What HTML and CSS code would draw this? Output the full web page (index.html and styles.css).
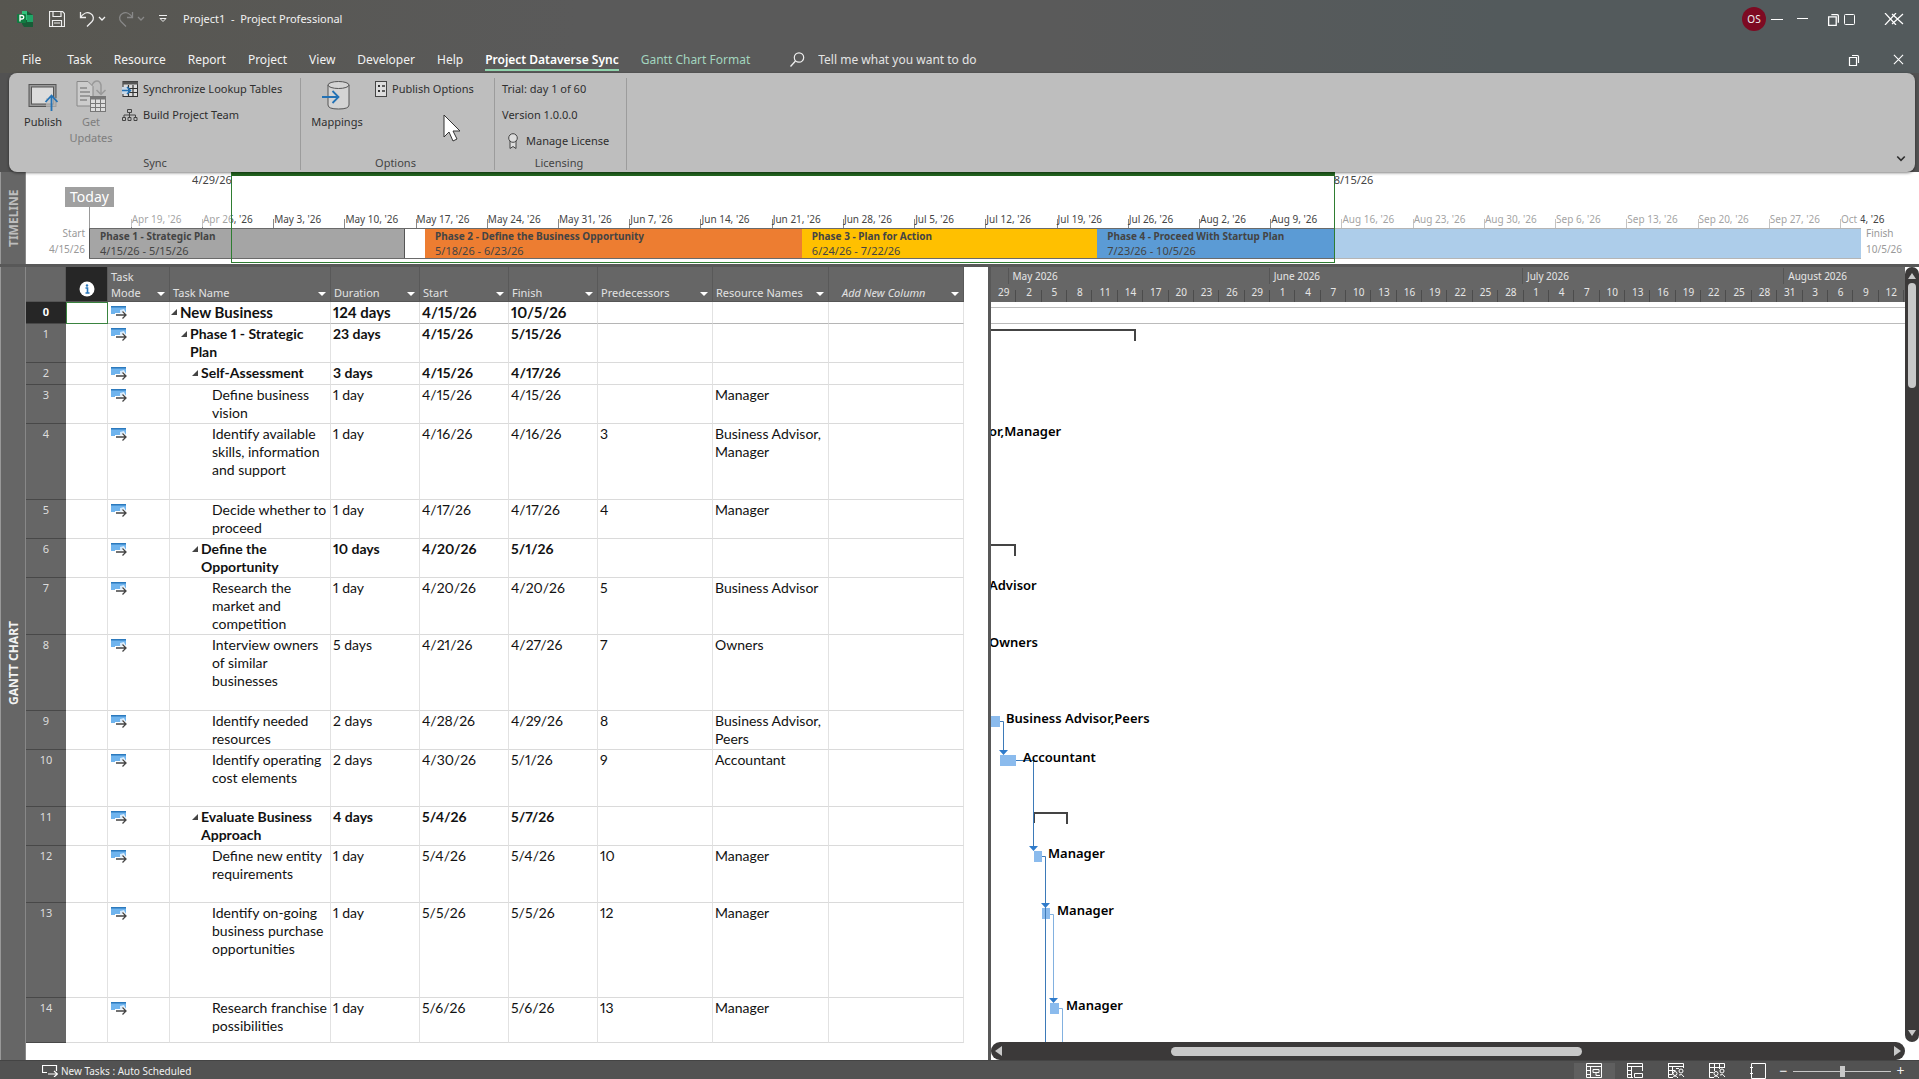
FILE: index.html
```html
<!DOCTYPE html>
<html lang="en">
<head>
    <meta charset="UTF-8">
    <title>Project1 - Project Professional</title>
    <link rel="stylesheet" href="styles.css">
</head>
<body>

<!-- shared icons -->
<svg class="defs" aria-hidden="true">
    <symbol id="i-auto" viewBox="0 0 16 13">
        <path d="M0 0h15v7H4v1H0z" fill="#6fb4ee"/>
        <path d="M0 0h15v1.500H0z" fill="#2b79bd"/>
        <path d="M9 4l4-1 2 4-6 2z" fill="#d6eafb"/>
        <path d="M4 9h11M11.500 5.500L15 9l-3.500 3.500" fill="none" stroke="#fff" stroke-width="3"/>
        <path d="M5 9h10M11.500 5.500L15 9l-3.500 3.500" fill="none" stroke="#444" stroke-width="1.300"/>
    </symbol>
    <symbol id="i-restore" viewBox="0 0 12 12">
        <path d="M1.500 3.500h7v8h-7zM4 1.500h5.500q1 0 1 1V9" fill="none" stroke="#fff" stroke-width="1.200"/>
    </symbol>
    <symbol id="i-close" viewBox="0 0 12 12">
        <path d="M1 1l10 10M11 1L1 11" fill="none" stroke="#fff" stroke-width="1.200"/>
    </symbol>
    <symbol id="i-chevron" viewBox="0 0 8 6">
        <path d="M1 1l3 3 3-3" fill="none" stroke="currentColor" stroke-width="1.300"/>
    </symbol>
</svg>

<header class="top">
    <div class="titlebar">
        <div class="quick">
            <svg class="app" viewBox="0 0 16 16"><path d="M5 0h5l6 4v12H7l-2-3z" fill="#185c37"/><path d="M5 0h5v9H5z" fill="#31c27c"/><path d="M10 4h6v7h-6z" fill="#21a366"/><rect y="3" width="9" height="9" rx="1" fill="#107c41"/><path d="M3 10.500v-6h2a1.700 1.700 0 010 3.500H3" fill="none" stroke="#fff" stroke-width="1.300"/></svg>
            <button class="qb save" aria-label="Save"><svg width="16" height="16" viewBox="0 0 16 16"><path d="M.5.5h13l2 2v13H.5zM4 .5v5h8v-5M3.500 15.500v-6h9v6M5 12h6" fill="none" stroke="#eee" stroke-width="1.200"/></svg></button>
            <button class="qb undo" aria-label="Undo"><svg width="16" height="16" viewBox="0 0 16 16"><path d="M1.500 1v5.500H7M1.500 6.500C4 2.500 8 .5 11.500 2.500S15 8 13 10.500l-5 5" fill="none" stroke="#eee" stroke-width="1.300"/></svg><svg width="8" height="6"><use href="#i-chevron"/></svg></button>
            <button class="qb redo" aria-label="Redo" disabled><svg width="16" height="16" viewBox="0 0 16 16"><path d="M14.500 1v5.500H9M14.500 6.500C12 2.500 8 .5 4.500 2.500S1 8 3 10.500l5 5" fill="none" stroke="#888" stroke-width="1.300"/></svg><svg width="8" height="6"><use href="#i-chevron"/></svg></button>
            <button class="qb more" aria-label="Customize toolbar"><svg width="8" height="8" viewBox="0 0 8 8"><path d="M0 .5h8M1 3.500l3 3 3-3z" fill="none" stroke="#eee"/></svg></button>
            <span class="doc">Project1&nbsp; -&nbsp; Project Professional</span>
        </div>
        <div class="window">
            <span class="avatar">OS</span>
            <button aria-label="Minimize app"><svg width="12" height="12"><path d="M0 6.500h12" stroke="#fff"/></svg></button>
            <button aria-label="Minimize"><svg width="12" height="12"><path d="M0 5.500h11" stroke="#fff"/></svg></button>
            <button aria-label="Restore"><svg width="13" height="13"><use href="#i-restore"/></svg></button>
            <button aria-label="Maximize"><svg width="12" height="12"><rect x=".5" y="1.500" width="10" height="10" rx="1" fill="none" stroke="#fff"/></svg></button>
            <button aria-label="Close"><svg width="20" height="12" viewBox="0 0 20 12"><path d="M1 0l11 12M12 0L1 12M8 1l11 10M19 1L8 11" stroke="#fff" stroke-width="1.200"/></svg></button>
        </div>
    </div>
    <nav class="tabs">
        <a href="#">File</a>
        <a href="#">Task</a>
        <a href="#">Resource</a>
        <a href="#">Report</a>
        <a href="#">Project</a>
        <a href="#">View</a>
        <a href="#">Developer</a>
        <a href="#">Help</a>
        <a href="#" class="active">Project Dataverse Sync</a>
        <a href="#" class="format">Gantt Chart Format</a>
        <label class="tell">
            <svg width="15" height="15" viewBox="0 0 15 15"><circle cx="9" cy="5.500" r="4.700" fill="none" stroke="#eee" stroke-width="1.200"/><path d="M5.500 9L.5 14.500" stroke="#eee" stroke-width="1.300"/></svg>
            <input type="text" placeholder="Tell me what you want to do">
        </label>
        <div class="docbtns">
            <button aria-label="Restore document"><svg width="12" height="12"><use href="#i-restore"/></svg></button>
            <button aria-label="Close document"><svg width="11" height="11"><use href="#i-close"/></svg></button>
        </div>
    </nav>
</header>

<section class="ribbon">
    <div class="group sync">
        <div class="tools">
            <button class="big publish">
                <svg width="30" height="32" viewBox="0 0 30 32"><rect x="1" y="4.500" width="27" height="22" fill="#999" stroke="#555"/><rect x="3.500" y="7" width="22" height="17" fill="#dcdcdc" stroke="#555"/><path d="M18 18h11v14H18z" fill="#bebebe" opacity=".7"/><path d="M23.500 31V16M17.500 22l6-6.500 6 6.500" fill="none" stroke="#2372b5" stroke-width="1.800"/></svg>
                Publish
            </button>
            <button class="big updates" disabled>
                <svg width="30" height="32" viewBox="0 0 30 32"><path d="M1 1.500h11l5 5V26H1z" fill="#ccc" stroke="#888"/><path d="M4 8h7M4 12h10M4 16h10M4 20h7" stroke="#888" stroke-width="1.500"/><path d="M16 5q2-4 5-4t4 4v9M20.500 10l4.500 4.500 4.500-4.500" fill="none" stroke="#999" stroke-width="1.500"/><rect x="14.500" y="16.500" width="15" height="15" fill="#ddd" stroke="#777"/><path d="M14 18h16" stroke="#777" stroke-width="3"/><path d="M19.500 17v14M24.500 17v14M15 23.500h14M15 27.500h14" stroke="#777"/></svg>
                Get<br>Updates
            </button>
            <div class="stack">
                <button class="small">
                    <svg width="16" height="16" viewBox="0 0 16 16"><rect x="1" y=".5" width="14.500" height="15" fill="#ddd" stroke="#333"/><path d="M1 2h15" stroke="#555" stroke-width="3"/><path d="M6.500 4v12M11 4v12M1 7.500h15M1 11.500h15" stroke="#333" stroke-width="1.200"/><path d="M0 6h6v7H0z" fill="#c8d8e8"/><path d="M0 9.500h8M5 6l3.500 3.500L5 13" fill="none" stroke="#2372b5" stroke-width="1.500"/></svg>
                    Synchronize Lookup Tables
                </button>
                <button class="small">
                    <svg width="16" height="16" viewBox="0 0 16 16"><path d="M5.500 2.500h4v3h-4zM.5 10.500h3v3h-3zM6 10.500h3v3H6zM12 10.500h3v3h-3zM7.500 6v4M2 10V8h11.500v2" fill="none" stroke="#444"/></svg>
                    Build Project Team
                </button>
            </div>
        </div>
        <div class="caption">Sync</div>
    </div>
    <div class="group options">
        <div class="tools">
            <button class="big mappings">
                <svg width="30" height="32" viewBox="0 0 30 32"><path d="M6 5v20q0 4 10.500 4T27 25V5" fill="#d4d4d4" stroke="#555"/><ellipse cx="16.500" cy="5" rx="10.500" ry="3.500" fill="#d4d4d4" stroke="#555"/><path d="M0 17h16M10.500 11l6 6-6 6" fill="none" stroke="#2372b5" stroke-width="1.800"/></svg>
                Mappings
            </button>
            <div class="stack">
                <button class="small">
                    <svg width="12" height="16" viewBox="0 0 12 16"><rect x=".5" y=".5" width="11" height="15" fill="#ddd" stroke="#444"/><path d="M3 4h2v2H3zM3 9h2v2H3z" fill="#333"/><path d="M7 5h3M7 10h3" stroke="#333" stroke-width="1.300"/></svg>
                    Publish Options
                </button>
            </div>
        </div>
        <div class="caption">Options</div>
    </div>
    <div class="group licensing">
        <div class="stack">
            <span>Trial: day 1 of 60</span>
            <span>Version 1.0.0.0</span>
            <button class="small">
                <svg width="12" height="16" viewBox="0 0 12 16"><path d="M3 8v7.500l3-2 3 2V8" fill="#ddd" stroke="#444"/><circle cx="6" cy="5" r="4.300" fill="#ddd" stroke="#444"/></svg>
                Manage License
            </button>
        </div>
        <div class="caption">Licensing</div>
    </div>
    <button class="collapse" aria-label="Collapse ribbon"><svg width="10" height="8"><use href="#i-chevron"/></svg></button>
    <svg class="cursor" width="18" height="29" viewBox="0 0 18 29"><path d="M1 1v22l5-5 4 9 4-2-4-8h7z" fill="#fff" stroke="#333"/></svg>
</section>

<section class="timeline">
    <div class="side">TIMELINE</div>
    <div class="edge start">Start<br>4/15/26</div>
    <div class="axis">
        <span class="today">Today</span>
        <div class="ticks">
            <span>Apr 19, '26</span><span>Apr 26, '26</span><span>May 3, '26</span><span>May 10, '26</span><span>May 17, '26</span><span>May 24, '26</span><span>May 31, '26</span><span>Jun 7, '26</span><span>Jun 14, '26</span><span>Jun 21, '26</span><span>Jun 28, '26</span><span>Jul 5, '26</span><span>Jul 12, '26</span><span>Jul 19, '26</span><span>Jul 26, '26</span><span>Aug 2, '26</span><span>Aug 9, '26</span><span>Aug 16, '26</span><span>Aug 23, '26</span><span>Aug 30, '26</span><span>Sep 6, '26</span><span>Sep 13, '26</span><span>Sep 20, '26</span><span>Sep 27, '26</span><span>Oct 4, '26</span>
        </div>
        <div class="phases">
            <div class="phase p1"><b>Phase 1 - Strategic Plan</b>4/15/26 - 5/15/26</div>
            <div class="phase p2"><b>Phase 2 - Define the Business Opportunity</b>5/18/26 - 6/23/26</div>
            <div class="phase p3"><b>Phase 3 - Plan for Action</b>6/24/26 - 7/22/26</div>
            <div class="phase p4"><b>Phase 4 - Proceed With Startup Plan</b>7/23/26 - 10/5/26</div>
        </div>
        <div class="veil before"></div>
        <div class="veil after"></div>
        <div class="range"><span class="from">4/29/26</span><span class="to">8/15/26</span></div>
    </div>
    <div class="edge finish">Finish<br>10/5/26</div>
</section>

<main class="workspace">
    <div class="side">GANTT CHART</div>
    <div class="sheet">
        <table>
            <colgroup>
                <col class="c-id"><col class="c-info"><col class="c-mode"><col class="c-name"><col class="c-date"><col class="c-date"><col class="c-date"><col class="c-pred"><col class="c-res"><col class="c-new">
            </colgroup>
            <thead>
            <tr>
                <th></th>
                <th class="info"><svg width="16" height="16" viewBox="0 0 16 16"><circle cx="8" cy="8" r="7.500" fill="#fff"/><circle cx="8" cy="4.500" r="1.200" fill="#2b79bd"/><path d="M6.500 7H8.500v5M6.500 12h4" fill="none" stroke="#2b79bd" stroke-width="1.600"/></svg></th>
                <th>Task<br>Mode<button aria-label="Filter Task Mode"></button></th>
                <th>Task Name<button aria-label="Filter Task Name"></button></th>
                <th>Duration<button aria-label="Filter Duration"></button></th>
                <th>Start<button aria-label="Filter Start"></button></th>
                <th>Finish<button aria-label="Filter Finish"></button></th>
                <th>Predecessors<button aria-label="Filter Predecessors"></button></th>
                <th>Resource Names<button aria-label="Filter Resource Names"></button></th>
                <th class="new">Add New Column<button aria-label="Add column"></button></th>
            </tr>
            </thead>
            <tbody>
            <tr class="h1 sum root"><th>0</th><td class="picked"></td><td><svg><use href="#i-auto"/></svg></td><td class="lv0">New Business</td><td>124 days</td><td>4/15/26</td><td>10/5/26</td><td></td><td></td><td></td></tr>
            <tr class="h2 sum"><th>1</th><td></td><td><svg><use href="#i-auto"/></svg></td><td class="lv1">Phase 1 - Strategic Plan</td><td>23 days</td><td>4/15/26</td><td>5/15/26</td><td></td><td></td><td></td></tr>
            <tr class="h1 sum"><th>2</th><td></td><td><svg><use href="#i-auto"/></svg></td><td class="lv2">Self-Assessment</td><td>3 days</td><td>4/15/26</td><td>4/17/26</td><td></td><td></td><td></td></tr>
            <tr class="h2"><th>3</th><td></td><td><svg><use href="#i-auto"/></svg></td><td class="lv3">Define business vision</td><td>1 day</td><td>4/15/26</td><td>4/15/26</td><td></td><td>Manager</td><td></td></tr>
            <tr class="h4"><th>4</th><td></td><td><svg><use href="#i-auto"/></svg></td><td class="lv3">Identify available skills, information and support</td><td>1 day</td><td>4/16/26</td><td>4/16/26</td><td>3</td><td>Business Advisor,<br>Manager</td><td></td></tr>
            <tr class="h2"><th>5</th><td></td><td><svg><use href="#i-auto"/></svg></td><td class="lv3">Decide whether to proceed</td><td>1 day</td><td>4/17/26</td><td>4/17/26</td><td>4</td><td>Manager</td><td></td></tr>
            <tr class="h2 sum"><th>6</th><td></td><td><svg><use href="#i-auto"/></svg></td><td class="lv2">Define the Opportunity</td><td>10 days</td><td>4/20/26</td><td>5/1/26</td><td></td><td></td><td></td></tr>
            <tr class="h3"><th>7</th><td></td><td><svg><use href="#i-auto"/></svg></td><td class="lv3">Research the market and competition</td><td>1 day</td><td>4/20/26</td><td>4/20/26</td><td>5</td><td>Business Advisor</td><td></td></tr>
            <tr class="h4"><th>8</th><td></td><td><svg><use href="#i-auto"/></svg></td><td class="lv3">Interview owners of similar businesses</td><td>5 days</td><td>4/21/26</td><td>4/27/26</td><td>7</td><td>Owners</td><td></td></tr>
            <tr class="h2"><th>9</th><td></td><td><svg><use href="#i-auto"/></svg></td><td class="lv3">Identify needed resources</td><td>2 days</td><td>4/28/26</td><td>4/29/26</td><td>8</td><td>Business Advisor,<br>Peers</td><td></td></tr>
            <tr class="h3"><th>10</th><td></td><td><svg><use href="#i-auto"/></svg></td><td class="lv3">Identify operating cost elements</td><td>2 days</td><td>4/30/26</td><td>5/1/26</td><td>9</td><td>Accountant</td><td></td></tr>
            <tr class="h2 sum"><th>11</th><td></td><td><svg><use href="#i-auto"/></svg></td><td class="lv2">Evaluate Business Approach</td><td>4 days</td><td>5/4/26</td><td>5/7/26</td><td></td><td></td><td></td></tr>
            <tr class="h3"><th>12</th><td></td><td><svg><use href="#i-auto"/></svg></td><td class="lv3">Define new entity requirements</td><td>1 day</td><td>5/4/26</td><td>5/4/26</td><td>10</td><td>Manager</td><td></td></tr>
            <tr class="h5"><th>13</th><td></td><td><svg><use href="#i-auto"/></svg></td><td class="lv3">Identify on-going business purchase opportunities</td><td>1 day</td><td>5/5/26</td><td>5/5/26</td><td>12</td><td>Manager</td><td></td></tr>
            <tr class="last"><th>14</th><td></td><td><svg><use href="#i-auto"/></svg></td><td class="lv3">Research franchise possibilities</td><td>1 day</td><td>5/6/26</td><td>5/6/26</td><td>13</td><td>Manager</td><td></td></tr>
            </tbody>
        </table>
    </div>
    <div class="chart">
        <div class="scale">
            <div class="months">
                <span class="m-apr"></span><span class="m-may">May 2026</span><span class="m-jun">June 2026</span><span class="m-jul">July 2026</span><span class="m-aug">August 2026</span>
            </div>
            <div class="days">
                <span>29</span><span>2</span><span>5</span><span>8</span><span>11</span><span>14</span><span>17</span><span>20</span><span>23</span><span>26</span><span>29</span><span>1</span><span>4</span><span>7</span><span>10</span><span>13</span><span>16</span><span>19</span><span>22</span><span>25</span><span>28</span><span>1</span><span>4</span><span>7</span><span>10</span><span>13</span><span>16</span><span>19</span><span>22</span><span>25</span><span>28</span><span>31</span><span>3</span><span>6</span><span>9</span><span>12</span>
            </div>
        </div>
        <svg class="bars">
            <!-- project row -->
            <path class="rule" d="M0 5.500H2000M0 21.500H2000"/>
            <!-- summary brackets -->
            <path class="bracket" d="M0 28h144v11M0 243h24v11M43 521v-10h33v11"/>
            <!-- task bars -->
            <path class="bar" d="M0 414h9v11H0zM9 453h16v11H9zM43 549h8v11h-8zM51 606h8v11h-8zM59 701h9v11h-9z"/>
            <!-- links -->
            <path class="link" d="M9 419.500h3.500V450M25 458.500h17.500V546M51 554.500h3.500V740"/>
            <path class="link light" d="M59 612.500h3.500V698M68 706.500h3.500V740"/>
            <path class="arrow" d="M8 448h9l-4.500 5zM38 544h9l-4.500 5zM50 601h9l-4.500 5zM58 696h9l-4.500 5z"/>
            <text x="-2" y="134">or,Manager</text>
            <text x="-2" y="288">Advisor</text>
            <text x="-2" y="345">Owners</text>
            <text x="15" y="421">Business Advisor,Peers</text>
            <text x="32" y="460">Accountant</text>
            <text x="57" y="556">Manager</text>
            <text x="66" y="613">Manager</text>
            <text x="75" y="708">Manager</text>
        </svg>
        <div class="scroll horizontal">
            <button class="left" aria-label="Scroll left"></button>
            <div class="track"><div class="thumb"></div></div>
            <button class="right" aria-label="Scroll right"></button>
        </div>
    </div>
    <div class="scroll vertical">
        <button class="up" aria-label="Scroll up"></button>
        <div class="track"><div class="thumb"></div></div>
        <button class="down" aria-label="Scroll down"></button>
    </div>
</main>

<footer class="status">
    <svg class="mode" width="16" height="12" viewBox="0 0 16 12"><path d="M5 7.500H.5v-7h14V6M6 9h9M12 6l3.500 3L12 12" fill="none" stroke="#fff" stroke-width="1.200"/></svg>
    <span>New Tasks : Auto Scheduled</span>
    <div class="views">
        <button class="on" aria-label="Gantt Chart"><svg width="17" height="16"><path d="M.5.500h15v14H.500zM.5 3.500h15M4.500 3v12M.5 7.500h4M.5 11.500h4M7 6.500h6v3H7zM10 9.500v3h4" /></svg></button>
        <button aria-label="Task Usage"><svg width="17" height="16"><path d="M.5.500h15V8M.5 0v14.500H6M.5 3.500h15M4.500 3v12M.5 7.500h4M.5 11.500h4M7.500 10.500h8v4h-8z"/></svg></button>
        <button aria-label="Team Planner"><svg width="17" height="16"><path d="M.5.500h15V5M.5 0v14.500H4M.5 3.500h15M4.500 3v8M.5 7.500h7M.5 11.500h4M8 5.500h3"/><circle cx="7" cy="10.500" r="2"/><circle cx="13" cy="8" r="2"/><path d="M4 15q3-4 6 0M11 12q3-2 5 2"/></svg></button>
        <button aria-label="Resource Sheet"><svg width="17" height="16"><path d="M.5.500h15V5M.5 0v14.500H4M.5 4.500h15M5.500 0v8M10.500 0v6M.5 9.500h4"/><circle cx="7" cy="10.500" r="2"/><circle cx="13" cy="8" r="2"/><path d="M4 15q3-4 6 0M11 12q3-2 5 2"/></svg></button>
        <button aria-label="Report"><svg width="17" height="16"><path d="M1.500.500h14v15h-14zM0 4.500h3M0 10.500h3"/></svg></button>
    </div>
    <div class="zoom">
        <button aria-label="Zoom out">−</button>
        <input type="range" min="0" max="100" value="50" aria-label="Zoom">
        <button aria-label="Zoom in">+</button>
    </div>
</footer>

</body>
</html>
```
FILE: styles.css
```css
* {
    box-sizing: border-box;
}

body {
    margin: 0;
    min-height: 100vh;
    display: flex;
    flex-direction: column;
    font-family: "Noto Sans", "Open Sans", sans-serif;
    font-size: 11px;
    line-height: 16px;
    background: #525252;
    overflow: hidden;
}

button {
    padding: 0;
    border: 0;
    background: none;
    font: inherit;
    color: inherit;
}

svg {
    flex: none;
}

.defs {
    position: absolute;
    width: 0;
    height: 0;
}

/* title bar and tabs */
.top {
    padding-bottom: 2px;
    background: linear-gradient(90deg, #575650 0, #5a5a5a 30%, #5a5a5a 55%, #535a5c 78%);
    color: #f2f2f2;
}

.titlebar {
    display: flex;
    justify-content: space-between;
    height: 38px;
}

.quick, .window, .tabs, .docbtns {
    display: flex;
    align-items: center;
}

.quick {
    padding-left: 17px;
}

.app {
    width: 16px;
    height: 16px;
}

.qb {
    display: flex;
    align-items: center;
    gap: 3px;
    margin-left: 14px;
}

.save {
    margin-left: 16px;
}

.redo {
    margin-left: 12px;
    color: #888;
}

.doc {
    margin-left: 16px;
}

.window {
    gap: 14px;
    padding-right: 15px;
}

.window button, .docbtns button {
    display: flex;
}

.avatar {
    width: 24px;
    height: 24px;
    border-radius: 50%;
    background: #7d0a22;
    font-size: 10px;
    line-height: 24px;
    text-align: center;
}

.window button:nth-child(2) {
    margin-left: -9px;
}

.window button:nth-child(4) {
    margin-left: 4px;
}

.window button:nth-child(5) {
    margin-left: -10px;
}

.window button:last-child {
    margin-left: 14px;
}

.tabs {
    gap: 22px;
    height: 33px;
    padding: 10px 15px 0 22px;
    font-size: 12px;
}

.tabs a {
    color: inherit;
    line-height: 19px;
    text-decoration: none;
    white-space: nowrap;
    border: solid transparent;
    border-width: 2px 0;
}

.tabs a:first-child {
    margin-right: 4px;
}

.tabs a.active {
    font-weight: 600;
    color: #fff;
    border-bottom-color: #8fd3ac;
}

.tabs a.format {
    color: #a3d5bf;
}

.tell {
    display: flex;
    align-items: center;
    gap: 13px;
    margin-left: 18px;
}

.tell input {
    width: 200px;
    padding: 0;
    border: 0;
    background: none;
    font: inherit;
    color: #fff;
}

.tell input::placeholder {
    color: #e4e4e4;
    opacity: 1;
}

.docbtns {
    gap: 33px;
    margin-left: auto;
}

/* ribbon */
.ribbon {
    position: relative;
    z-index: 2;
    display: flex;
    height: 99px;
    margin: 0 4px 0 9px;
    padding: 5px 0 2px;
    border-radius: 8px;
    background: #bebebe;
    box-shadow: 0 1px 3px rgba(0, 0, 0, .5);
    color: #2e2e2e;
}

.group {
    display: flex;
    flex-direction: column;
    justify-content: space-between;
    border-right: 1px solid #9c9c9c;
}

.sync {
    width: 292px;
    padding-left: 15px;
}

.options {
    width: 194px;
    padding-left: 10px;
}

.licensing {
    width: 132px;
    padding-left: 7px;
}

.tools {
    display: flex;
    align-items: flex-start;
}

.caption {
    line-height: 14px;
    text-align: center;
    color: #444;
}

.sync .caption, .options .caption {
    padding-right: 14px;
}

.licensing .caption {
    padding-right: 10px;
}

.big {
    display: flex;
    flex-direction: column;
    align-items: center;
    width: 52px;
    padding-top: 2px;
}

.big svg {
    margin-bottom: 2px;
}

.publish {
    width: 38px;
    margin-right: 3px;
}

.updates {
    color: #7d7d7d;
}

.stack {
    display: flex;
    flex-direction: column;
    gap: 10px;
    padding: 3px 0 0 5px;
}

.licensing .stack {
    padding-left: 0;
}

.options .stack {
    padding-left: 12px;
}

.small {
    display: flex;
    gap: 5px;
    white-space: nowrap;
}

.licensing .small {
    gap: 7px;
    padding-left: 5px;
}

.collapse {
    position: absolute;
    right: 9px;
    bottom: 9px;
    display: flex;
}

.cursor {
    position: absolute;
    left: 434px;
    top: 41px;
}

/* timeline */
.side {
    width: 26px;
    flex: none;
    padding-right: 2px;
    background: #666;
    color: #bdbdbd;
    border-left: 1px solid #888;
    border-right: 1px solid #999;
    font-size: 12px;
    font-weight: 700;
    line-height: 22px;
    text-align: center;
    writing-mode: vertical-rl;
    transform: rotate(180deg);
}

.timeline {
    display: grid;
    grid-template-columns: 26px 64px minmax(0, 1fr) 58px;
    height: 95px;
    border-bottom: 3px solid #585858;
    background: #fff;
    color: #444;
}

.edge {
    padding: 53px 5px 0;
    color: #999;
    font-size: 10px;
}

.start {
    text-align: right;
}

.axis {
    position: relative;
    display: flex;
    flex-direction: column;
    align-items: flex-start;
    margin-left: -1px;
}

.today {
    height: 20px;
    margin: 15px 0 0 -24px;
    padding: 0 5px;
    background: #a0a0a0;
    color: #fff;
    font-size: 14px;
    line-height: 20px;
}

.ticks {
    display: flex;
    width: 100%;
    height: 21px;
    padding-left: 2.299%;
    border-left: 1px solid #999;
    font-size: 10px;
    line-height: 24px;
}

.ticks span {
    flex: 7 1 0;
    min-width: 0;
    padding-left: 1px;
    white-space: nowrap;
    background: linear-gradient(#888, #888) 0 100% / 1px 9px no-repeat;
}

.ticks span:last-child {
    flex-grow: 2;
}

.phases {
    display: grid;
    grid-template-columns: 31fr 2fr 37fr 29fr 75fr;
    width: 100%;
    height: 31px;
    border: solid #6a6a6a;
    border-width: 1px 0;
}

.phase {
    padding-left: 10px;
    line-height: 14px;
    white-space: nowrap;
    overflow: hidden;
}

.phase b {
    display: block;
    line-height: 15px;
    font-size: 10px;
}

.p1 {
    background: #a5a5a5;
    border: solid #555;
    border-width: 0 1px;
}

.p2 {
    grid-column: 3;
    background: #ed7d31;
}

.p3 {
    background: #ffc000;
}

.p4 {
    background: #5b9bd5;
}

.veil {
    position: absolute;
    background: rgba(255, 255, 255, .5);
}

.before {
    top: 36px;
    height: 19px;
    left: 1px;
    width: 8%;
}

.after {
    top: 36px;
    height: 51px;
    left: 70.3%;
    right: 0;
}

.range {
    position: absolute;
    top: 0;
    bottom: 1px;
    left: 8%;
    width: 62.300%;
    border: 1px solid #2f7d32;
    border-top: 4px solid #23651f;
}

.range span {
    position: absolute;
    top: -4px;
}

.from {
    right: 100%;
}

.to {
    left: 100%;
}

/* workspace */
.workspace {
    flex: 1;
    display: flex;
    background: #fff;
}

.workspace > .side {
    color: #f2f2f2;
}

.sheet {
    flex: none;
    box-sizing: content-box;
    width: 938px;
    padding-right: 24px;
    border-right: 3px solid #585858;
}

table {
    width: 100%;
    table-layout: fixed;
    border-collapse: separate;
    border-spacing: 0;
    font-family: Lato, "Open Sans", sans-serif;
    font-size: 14px;
    font-variant-numeric: proportional-nums;
    line-height: 18px;
    color: #111;
}

.c-id {
    width: 40px;
}

.c-info {
    width: 42px;
}

.c-mode {
    width: 62px;
}

.c-name {
    width: 161px;
}

.c-date {
    width: 89px;
}

.c-pred {
    width: 115px;
}

.c-res {
    width: 116px;
}

th, td {
    text-align: left;
    vertical-align: top;
}

thead th {
    position: relative;
    height: 35px;
    padding: 0 3px;
    vertical-align: bottom;
    background: #666;
    border-right: 1px solid #595959;
    border-bottom: 1px solid #555;
    font: 11px/16px "Noto Sans", sans-serif;
    color: #e2e2e2;
    white-space: nowrap;
}

thead th button {
    position: absolute;
    right: 4px;
    bottom: 5px;
    border: solid transparent;
    border-width: 4px 4px 0;
    border-top-color: #fff;
}

thead th.info {
    background: #262626;
    text-align: center;
}

thead th.new {
    padding-left: 13px;
    font-style: italic;
}

tbody th {
    padding: 1px 0 0;
    background: #666;
    border-bottom: 1px solid #484848;
    font: 11px/18px "Noto Sans", sans-serif;
    color: #ddd;
    text-align: center;
}

td {
    padding: 1px 0 0 2px;
    border-right: 1px solid #e2e2e2;
    border-bottom: 1px solid #dadada;
}

td svg {
    display: block;
    width: 16px;
    height: 13px;
    margin: 3px 0 0 1px;
}

.h1 {
    height: 22px;
}

.h2 {
    height: 39px;
}

.h3 {
    height: 57px;
}

.h4 {
    height: 76px;
}

.h5 {
    height: 95px;
}

.last {
    height: 45px;
}

.sum td {
    font-weight: 700;
}

.root td {
    border-bottom-color: #b5b5b5;
    font-size: 15px;
}

.root th {
    background: #262626;
    color: #fff;
    font-weight: 700;
}

.root td.picked {
    border: 1px solid #3a8440;
}

td.lv0 {
    padding-left: 10px;
}

td.lv1 {
    padding-left: 20px;
}

td.lv2 {
    padding-left: 31px;
}

td.lv3 {
    padding-left: 42px;
}

/* outline triangle in front of a summary task */
.lv0::before, .lv1::before, .lv2::before {
    content: "";
    float: left;
    margin: 6px 0 0 -9px;
    border: solid transparent;
    border-width: 0 0 6px 6px;
    border-bottom-color: #444;
}

/* gantt chart */
.chart {
    flex: 1;
    min-width: 0;
    display: flex;
    flex-direction: column;
}

.scale {
    height: 35px;
    padding: 1px 1px 0 0;
    background: #666;
    color: #e6e6e6;
    font-size: 10px;
}

.months, .days {
    display: flex;
}

.months span {
    flex: 31 1 0;
    height: 16px;
    padding-left: 4px;
    border-left: 1px solid #555;
}

.months .m-apr {
    flex-grow: 2;
    padding: 0;
    border: 0;
}

.months .m-jun {
    flex-grow: 30;
}

.months .m-aug {
    flex-grow: 14;
}

.days span {
    flex: 1 1 0;
    height: 18px;
    text-align: center;
    background: linear-gradient(#4c4c4c, #4c4c4c) 100% 100% / 1px 12px no-repeat;
}

.bars {
    flex: 1;
    width: 100%;
    overflow: hidden;
}

.bars path {
    fill: none;
}

.bars text {
    font-size: 13px;
    font-weight: 600;
    fill: #000;
}

.bars .rule {
    stroke: #bbb;
}

.bars .bracket {
    stroke: #444;
    stroke-width: 2;
}

.bars .bar {
    fill: #8bbbed;
}

.bars .link {
    stroke: #3d7ab8;
}

.bars .light {
    stroke: #82b1e0;
}

.bars .arrow {
    fill: #2f7bcb;
}

/* scroll bars */
.scroll {
    display: flex;
    align-items: center;
    justify-content: space-between;
    background: #3b3939;
    border-radius: 9px;
}

.scroll button {
    border: 5px solid transparent;
}

.scroll .track {
    flex: 1;
}

.thumb {
    border-radius: 5px;
    background: #c8c8c8;
}

.horizontal {
    height: 18px;
    padding: 0 4px;
}

.horizontal .thumb {
    width: 46%;
    height: 9px;
    margin-left: 19%;
}

.horizontal .left {
    border-width: 5px 7px 5px 0;
    border-right-color: #c8c8c8;
}

.horizontal .right {
    border-width: 5px 0 5px 7px;
    border-left-color: #c8c8c8;
}

.vertical {
    flex-direction: column;
    width: 14px;
    margin-bottom: 18px;
    padding: 6px 0;
}

.vertical .thumb {
    width: 8px;
    height: 14%;
    margin-top: 4px;
}

.vertical .track {
    display: flex;
}

.vertical .up {
    border-width: 0 4px 6px;
    border-bottom-color: #c8c8c8;
}

.vertical .down {
    border-width: 6px 4px 0;
    border-top-color: #c8c8c8;
}

/* status bar */
.status {
    display: flex;
    align-items: center;
    height: 19px;
    padding: 2px 14px 0 42px;
    background: #525252;
    border-top: 1px solid #444;
    color: #f0f0f0;
    font-size: 10px;
}

.mode {
    margin-right: 3px;
}

.views {
    display: flex;
    margin-left: auto;
}

.views button {
    display: flex;
    justify-content: center;
    width: 41px;
    height: 16px;
}

.views .on {
    background: #5f5f5f;
}

.views svg {
    fill: none;
    stroke: #fff;
}

.zoom {
    display: flex;
    align-items: center;
    gap: 5px;
}

.zoom button {
    width: 9px;
    font-size: 14px;
}

.zoom input {
    width: 98px;
    height: 11px;
    margin: 0;
    appearance: none;
    background: linear-gradient(#c8c8c8, #c8c8c8) 0 50% / 100% 1px no-repeat;
}

.zoom input::-webkit-slider-thumb {
    appearance: none;
    width: 5px;
    height: 11px;
    background: #c8c8c8;
}
```
